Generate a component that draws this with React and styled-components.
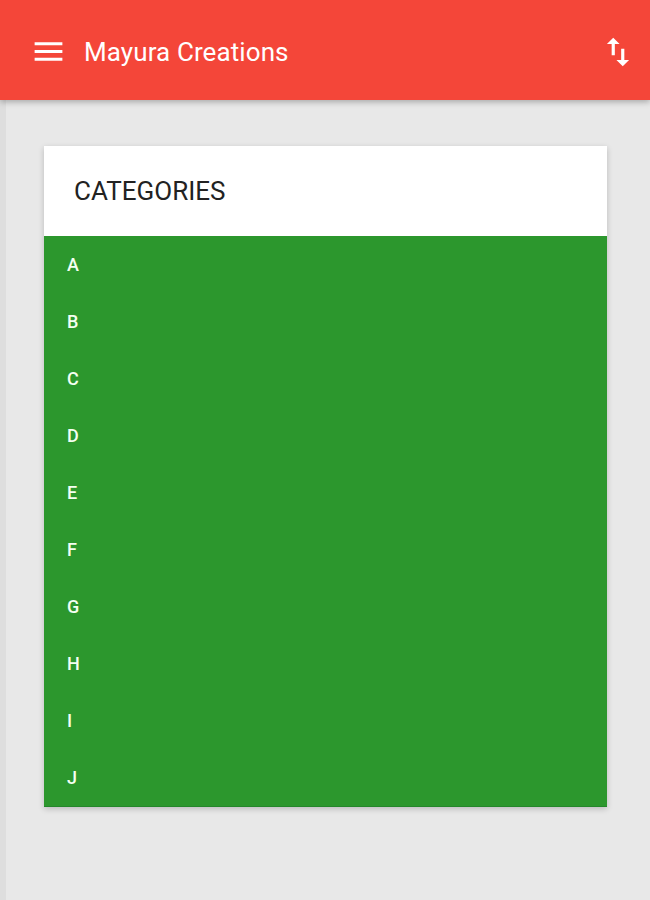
import React from 'react';
import styled, { createGlobalStyle } from 'styled-components';

const GlobalStyle = createGlobalStyle`
  html, body {
    margin: 0;
    padding: 0;
    background: #e8e8e8;
    font-family: Roboto, "Noto Sans", Arial, sans-serif;
  }
`;

const Page = styled.div`
  min-height: 900px;
  background: #e8e8e8;
  border-left: 6px solid #dedede;
  box-sizing: border-box;
`;

const TopBar = styled.header`
  position: relative;
  z-index: 2;
  height: 100px;
  box-sizing: border-box;
  margin-left: -6px;
  background: #f44639;
  display: flex;
  align-items: center;
  padding: 3px 13px 0 29px;
  box-shadow: 0 2px 6px rgba(0, 0, 0, 0.28);
  color: #fff;
`;

const IconButton = styled.button`
  border: 0;
  background: none;
  padding: 0;
  color: #fff;
  display: flex;
  align-items: center;
  justify-content: center;
  width: 38px;
  height: 38px;
`;

const Title = styled.h1`
  flex: 1;
  margin: 0 0 0 17px;
  font-size: 26px;
  font-weight: 400;
  letter-spacing: 0.1px;
`;

const Content = styled.main`
  padding: 46px 43px 0 38px;
`;

const Card = styled.section`
  background: #fff;
  box-shadow: 0 2px 6px rgba(0, 0, 0, 0.2);
`;

const CardHead = styled.h2`
  margin: 0;
  height: 90px;
  display: flex;
  align-items: center;
  padding-left: 30px;
  font-size: 26px;
  font-weight: 400;
  color: #222;
`;

const List = styled.ul`
  list-style: none;
  margin: 0;
  padding: 0;
  background: #2c972d;
  border-bottom: 1px solid #23872a;
`;

const Item = styled.li`
  height: 57px;
  display: flex;
  align-items: center;
  padding-left: 23px;
  font-size: 18px;
  font-weight: 500;
  color: #f4fff2;
`;

const MenuIcon = () => (
  <svg width="37" height="37" viewBox="0 0 24 24" fill="currentColor">
    <path d="M3 18h18v-2H3v2zm0-5h18v-2H3v2zm0-7v2h18V6H3z" />
  </svg>
);

const SortIcon = () => (
  <svg width="38" height="38" viewBox="0 0 24 24" fill="currentColor">
    <path d="M16 17.01V10h-2v7.01h-3L15 21l4-3.99h-3zM9 3L5 6.99h3V14h2V6.99h3L9 3z" />
  </svg>
);

const categories = ['A', 'B', 'C', 'D', 'E', 'F', 'G', 'H', 'I', 'J'];

export default function App() {
  return (
    <>
      <GlobalStyle />
      <Page>
        <TopBar>
          <IconButton aria-label="menu"><MenuIcon /></IconButton>
          <Title>Mayura Creations</Title>
          <IconButton aria-label="sort"><SortIcon /></IconButton>
        </TopBar>
        <Content>
          <Card>
            <CardHead>CATEGORIES</CardHead>
            <List>
              {categories.map((c) => (
                <Item key={c}>{c}</Item>
              ))}
            </List>
          </Card>
        </Content>
      </Page>
    </>
  );
}
